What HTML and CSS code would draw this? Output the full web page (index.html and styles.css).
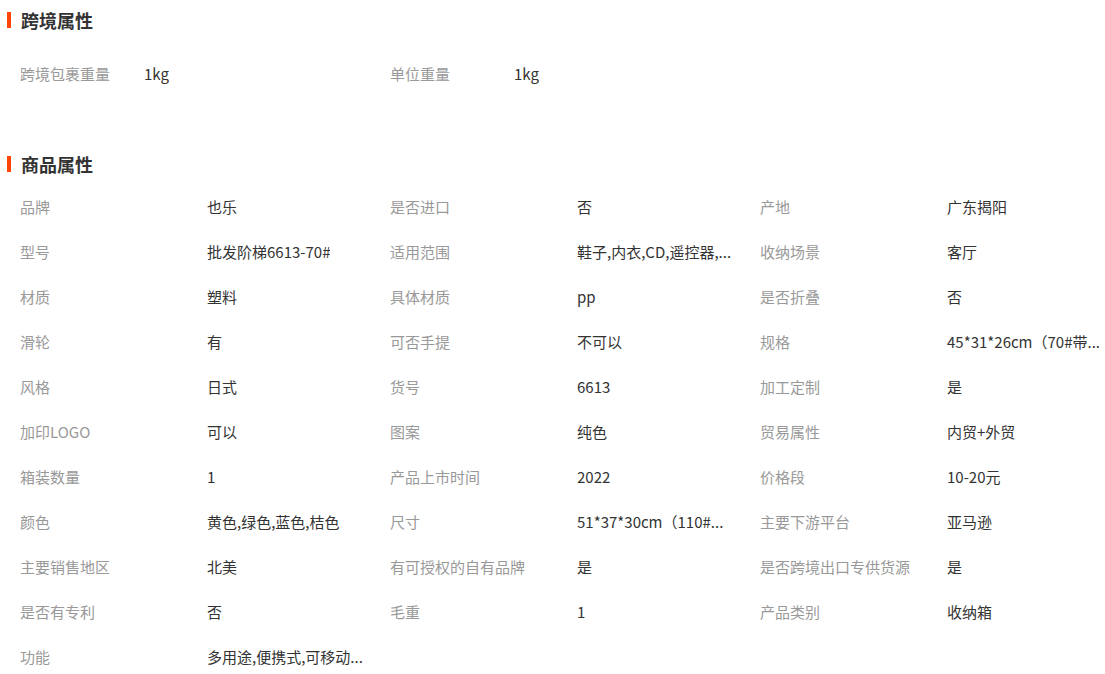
FILE: index.html
```html
<!DOCTYPE html>
<html lang="zh-CN">
<head>
<meta charset="utf-8">
<title>属性</title>
<link rel="stylesheet" href="styles.css">
</head>
<body>
<section class="section section-cross">
  <h2 class="section-title">跨境属性</h2>
  <div class="props props-short">
    <div class="prop"><span class="label">跨境包裹重量</span><span class="value">1kg</span></div>
    <div class="prop"><span class="label">单位重量</span><span class="value">1kg</span></div>
  </div>
</section>
<section class="section section-goods">
  <h2 class="section-title">商品属性</h2>
  <div class="props">
    <div class="prop"><span class="label">品牌</span><span class="value">也乐</span></div>
    <div class="prop"><span class="label">是否进口</span><span class="value">否</span></div>
    <div class="prop"><span class="label">产地</span><span class="value">广东揭阳</span></div>
    <div class="prop"><span class="label">型号</span><span class="value">批发阶梯6613-70#</span></div>
    <div class="prop"><span class="label">适用范围</span><span class="value">鞋子,内衣,CD,遥控器,...</span></div>
    <div class="prop"><span class="label">收纳场景</span><span class="value">客厅</span></div>
    <div class="prop"><span class="label">材质</span><span class="value">塑料</span></div>
    <div class="prop"><span class="label">具体材质</span><span class="value">pp</span></div>
    <div class="prop"><span class="label">是否折叠</span><span class="value">否</span></div>
    <div class="prop"><span class="label">滑轮</span><span class="value">有</span></div>
    <div class="prop"><span class="label">可否手提</span><span class="value">不可以</span></div>
    <div class="prop"><span class="label">规格</span><span class="value">45*31*26cm（70#带...</span></div>
    <div class="prop"><span class="label">风格</span><span class="value">日式</span></div>
    <div class="prop"><span class="label">货号</span><span class="value">6613</span></div>
    <div class="prop"><span class="label">加工定制</span><span class="value">是</span></div>
    <div class="prop"><span class="label">加印LOGO</span><span class="value">可以</span></div>
    <div class="prop"><span class="label">图案</span><span class="value">纯色</span></div>
    <div class="prop"><span class="label">贸易属性</span><span class="value">内贸+外贸</span></div>
    <div class="prop"><span class="label">箱装数量</span><span class="value">1</span></div>
    <div class="prop"><span class="label">产品上市时间</span><span class="value">2022</span></div>
    <div class="prop"><span class="label">价格段</span><span class="value">10-20元</span></div>
    <div class="prop"><span class="label">颜色</span><span class="value">黄色,绿色,蓝色,桔色</span></div>
    <div class="prop"><span class="label">尺寸</span><span class="value">51*37*30cm（110#...</span></div>
    <div class="prop"><span class="label">主要下游平台</span><span class="value">亚马逊</span></div>
    <div class="prop"><span class="label">主要销售地区</span><span class="value">北美</span></div>
    <div class="prop"><span class="label">有可授权的自有品牌</span><span class="value">是</span></div>
    <div class="prop"><span class="label">是否跨境出口专供货源</span><span class="value">是</span></div>
    <div class="prop"><span class="label">是否有专利</span><span class="value">否</span></div>
    <div class="prop"><span class="label">毛重</span><span class="value">1</span></div>
    <div class="prop"><span class="label">产品类别</span><span class="value">收纳箱</span></div>
    <div class="prop"><span class="label">功能</span><span class="value">多用途,便携式,可移动...</span></div>
  </div>
</section>
</body>
</html>
```

FILE: styles.css
```css
html, body {
  margin: 0;
  padding: 0;
  background: #fff;
}
body {
  width: 1105px;
  font-family: "Noto Sans CJK SC", "Noto Sans", sans-serif;
  color: #333;
}
.section-title {
  display: flex;
  align-items: center;
  gap: 10px;
  margin: 0;
  padding-left: 7px;
  height: 22px;
  font-size: 18px;
  line-height: 22px;
  font-weight: bold;
  color: #333;
}
.section-title::before {
  content: "";
  display: block;
  width: 4px;
  height: 16px;
  background: #ff4400;
}
.section-cross {
  padding-top: 9px;
}
.section-cross .props {
  margin-top: 20px;
}
.section-goods {
  margin-top: 57px;
}
.section-goods .props {
  margin-top: 9px;
}
.props {
  display: grid;
  grid-template-columns: repeat(3, 370px);
  padding-left: 20px;
}
.prop {
  display: flex;
  height: 45px;
  align-items: center;
  font-size: 15px;
  white-space: nowrap;
}
.label {
  flex: 0 0 187px;
  color: #999;
}
.props-short .label {
  flex-basis: 124px;
}
.value {
  max-width: 160px;
  overflow: hidden;
  text-overflow: ellipsis;
  color: #333;
}
```
